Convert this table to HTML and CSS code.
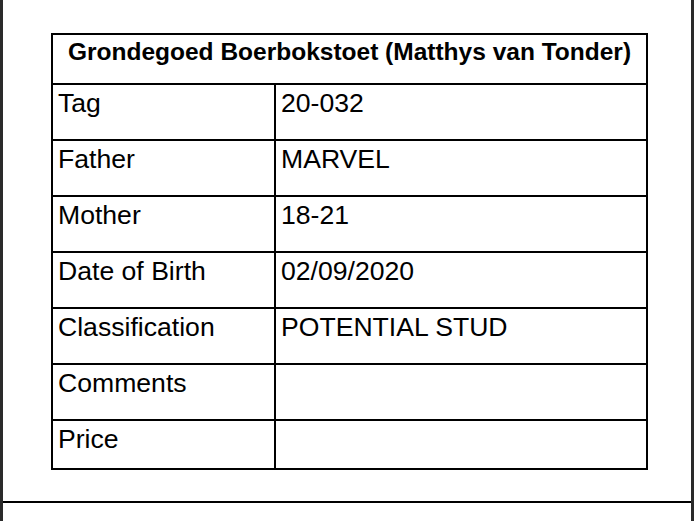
FILE: index.html
```html
<!DOCTYPE html>
<html lang="en">
<head>
<meta charset="utf-8">
<title>Grondegoed Boerbokstoet</title>
<link rel="stylesheet" href="styles.css">
</head>
<body>
<div class="frame">
  <div class="edge"></div>
  <main class="page">
    <div class="sheet">
      <div class="card">
        <div class="cell head">Grondegoed Boerbokstoet (Matthys van Tonder)</div>
        <div class="cell">Tag</div><div class="cell">20-032</div>
        <div class="cell">Father</div><div class="cell">MARVEL</div>
        <div class="cell">Mother</div><div class="cell">18-21</div>
        <div class="cell">Date of Birth</div><div class="cell">02/09/2020</div>
        <div class="cell">Classification</div><div class="cell">POTENTIAL STUD</div>
        <div class="cell">Comments</div><div class="cell"></div>
        <div class="cell">Price</div><div class="cell"></div>
      </div>
    </div>
    <div class="rule"></div>
  </main>
  <div class="edge"></div>
</div>
</body>
</html>
```

FILE: styles.css
```css
html, body {
  margin: 0;
  padding: 0;
  background: #fff;
}

.frame {
  display: flex;
  width: 694px;
  height: 521px;
  overflow: hidden;
  font-family: "Liberation Sans", Arial, sans-serif;
  color: #000;
}

.edge {
  width: 3px;
  flex: none;
  background: #2a2a2a;
}

.page {
  flex: 1;
  display: flex;
  flex-direction: column;
  background: #fff;
}

.sheet {
  padding: 33px 0 0 48px;
  height: 468px;
  box-sizing: border-box;
}

.card {
  display: grid;
  grid-template-columns: 221px 370px;
  grid-template-rows: 48px repeat(6, 54px) 47px;
  gap: 2px;
  padding: 2px;
  width: 597px;
  box-sizing: border-box;
  background: #000;
}

.cell {
  background: #fff;
  font-size: 26.6px;
  line-height: 30px;
  padding: 3px 5px 0;
  white-space: nowrap;
}

.cell.head {
  grid-column: 1 / span 2;
  font-weight: bold;
  font-size: 24.5px;
  line-height: 28px;
  text-align: center;
  padding-top: 3px;
}

.rule {
  margin-top: 33px;
  height: 2px;
  background: #000;
}
```
